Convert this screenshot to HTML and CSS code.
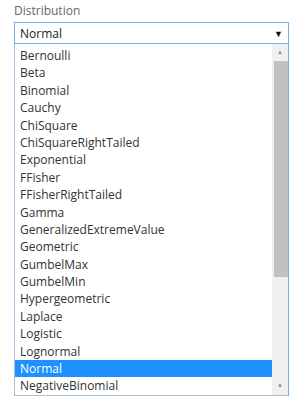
FILE: index.html
```html
<!DOCTYPE html>
<html>
<head>
  <meta charset="utf-8">
  <title>Distribution</title>
  <link rel="stylesheet" href="styles.css">
</head>
<body>
  <div class="panel">
    <div class="label">Distribution</div>

    <div class="select-wrap">
      <div class="select">
        <span>Normal</span>
        <span class="arrow">&#9660;</span>
      </div>

      <div class="dropdown">
        <ul class="options">
          <li>Bernoulli</li>
          <li>Beta</li>
          <li>Binomial</li>
          <li>Cauchy</li>
          <li>ChiSquare</li>
          <li>ChiSquareRightTailed</li>
          <li>Exponential</li>
          <li>FFisher</li>
          <li>FFisherRightTailed</li>
          <li>Gamma</li>
          <li>GeneralizedExtremeValue</li>
          <li>Geometric</li>
          <li>GumbelMax</li>
          <li>GumbelMin</li>
          <li>Hypergeometric</li>
          <li>Laplace</li>
          <li>Logistic</li>
          <li>Lognormal</li>
          <li class="selected">Normal</li>
          <li>NegativeBinomial</li>
        </ul>
        <div class="scrollbar">
          <div class="scroll-btn">&#9650;</div>
          <div class="scroll-track">
            <div class="scroll-thumb"></div>
          </div>
          <div class="scroll-btn">&#9660;</div>
        </div>
      </div>
    </div>

    <div class="row">
      <span class="row-label">START TIME</span>
      <span class="row-value">8/12/2016 4:33:00 PM</span>
    </div>
  </div>
</body>
</html>
```

FILE: styles.css
```css
body {
  margin: 0;
  background-color: #fff;
  font-family: 'Open Sans', Arial, sans-serif;
  font-size: 12px;
  color: #333;
}
.panel {
  padding: 2px 6px 0 14px;
}
.label {
  color: #666;
  line-height: 18px;
}
.select-wrap {
  position: relative;
  margin-top: 2px;
}
.select {
  display: flex;
  justify-content: space-between;
  align-items: center;
  height: 20px;
  padding: 0 5px 0 5px;
  border: 1px solid #7aaee2;
  color: #222;
}
.arrow {
  font-size: 9px;
  color: #111;
}
.dropdown {
  position: absolute;
  top: 100%;
  left: 0;
  right: 0;
  display: flex;
  height: 351px;
  border: 1px solid #a9bfd6;
  border-right-color: #7aaee2;
  border-top: none;
  background-color: #fff;
}
.options {
  flex: 1;
  list-style: none;
  margin: 0;
  padding: 3px 0 0 0;
}
.options li {
  height: 17.4px;
  line-height: 17.4px;
  padding-left: 5px;
  white-space: nowrap;
}
.options li.selected {
  background-color: #1e90ff;
  color: #fff;
}
.scrollbar {
  display: flex;
  flex-direction: column;
  width: 16px;
  background-color: #f0f0f0;
}
.scroll-btn {
  height: 17px;
  text-align: center;
  font-size: 6px;
  line-height: 17px;
  color: #8a8a8a;
}
.scroll-track {
  flex: 1;
}
.scroll-thumb {
  height: 216px;
  margin-left: 2px;
  background-color: #c1c1c1;
}
.row {
  display: flex;
  margin-top: 352px;
  color: #555;
}
.row-label {
  width: 104px;
}
```
